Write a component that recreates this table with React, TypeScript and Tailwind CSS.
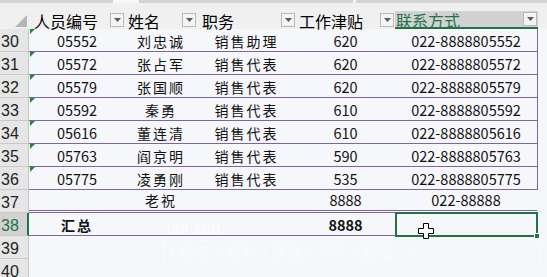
import React from 'react';

const CJK = '"Noto Sans CJK SC", "Noto Sans", sans-serif';

type Row = {
  n: number;
  id?: string;
  name?: string;
  job?: string;
  pay?: string;
  tel?: string;
  flag?: boolean;
};

const rows: Row[] = [
  { n: 30, id: '05552', name: '刘忠诚', job: '销售助理', pay: '620', tel: '022-8888805552', flag: true },
  { n: 31, id: '05572', name: '张占军', job: '销售代表', pay: '620', tel: '022-8888805572', flag: true },
  { n: 32, id: '05579', name: '张国顺', job: '销售代表', pay: '620', tel: '022-8888805579', flag: true },
  { n: 33, id: '05592', name: '秦勇', job: '销售代表', pay: '610', tel: '022-8888805592', flag: true },
  { n: 34, id: '05616', name: '董连清', job: '销售代表', pay: '610', tel: '022-8888805616', flag: true },
  { n: 35, id: '05763', name: '阎京明', job: '销售代表', pay: '590', tel: '022-8888805763', flag: true },
  { n: 36, id: '05775', name: '凌勇刚', job: '销售代表', pay: '535', tel: '022-8888805775', flag: true },
];

function FilterBtn() {
  return (
    <div className="w-[14px] h-[14px] border border-[#b9b9b9] bg-[#f4f4f4] flex items-center justify-center shrink-0">
      <svg width="7" height="4" viewBox="0 0 7 4">
        <path d="M0 0h7L3.5 4z" fill="#5a5a5a" />
      </svg>
    </div>
  );
}

function RowNum({ n, active }: { n: number; active?: boolean }) {
  return (
    <div
      className={
        'w-[29px] shrink-0 h-full flex items-end pb-[1px] pl-[1px] text-[16px] leading-none border-b border-[#c9c9c9] ' +
        (active
          ? 'bg-[#d2d2d2] text-[#217346] border-r-2 border-r-[#217346]'
          : 'bg-[#e6e6e6] text-[#222] border-r border-r-[#c6c6c6]')
      }
      style={{ fontFamily: '"Liberation Sans", sans-serif' }}
    >
      {n}
    </div>
  );
}

function Cell({
  w,
  children,
  cjk,
  bold,
  flag,
}: {
  w: string;
  children?: React.ReactNode;
  cjk?: boolean;
  bold?: boolean;
  flag?: boolean;
}) {
  return (
    <div
      className={
        w +
        ' relative shrink-0 h-full flex items-end justify-center pb-[3px] text-[#111] leading-none ' +
        (cjk ? 'text-[14px] tracking-[2px] ' : 'text-[14.5px] ') +
        (bold ? 'font-bold' : '')
      }
      style={{ fontFamily: CJK }}
    >
      {flag && (
        <svg className="absolute left-[1px] top-0" width="5" height="5" viewBox="0 0 5 5">
          <path d="M0 0h5L0 5z" fill="#1e8c2d" />
        </svg>
      )}
      {children}
    </div>
  );
}

export default function App() {
  return (
    <div className="w-[547px] h-[277px] overflow-hidden relative bg-[#f6f7fa]" style={{ fontFamily: CJK }}>
      {/* formula bar edge */}
      <div className="h-[3px] flex">
        <div className="w-[113px] bg-[#d4d4d4]" />
        <div className="w-[26px]" />
        <div className="w-[214px] bg-[#d4d4d4]" />
        <div className="w-[3px]" />
        <div className="flex-1 bg-[#d4d4d4]" />
      </div>
      <div className="h-[8px] bg-[#f0f0f0]" />

      {/* table header replacing column letters */}
      <div className="h-[18px] flex bg-[#f0f0f0] text-[16px] leading-none text-black">
        <div className="w-[29px] shrink-0 flex items-end justify-end pr-[2px] pb-[2px]">
          <svg width="12" height="12" viewBox="0 0 12 12">
            <path d="M12 0v12H0z" fill="#b5b5b5" />
          </svg>
        </div>
        <div className="w-[96px] shrink-0 flex items-center justify-between pl-[5px] pr-[1px]">
          <span className="mt-[1px]">人员编号</span>
          <FilterBtn />
        </div>
        <div className="w-[72px] shrink-0 flex items-center justify-between pl-[3px] pr-[1px]">
          <span className="mt-[1px]">姓名</span>
          <FilterBtn />
        </div>
        <div className="w-[99px] shrink-0 flex items-center justify-between pl-[5px] pr-[1px]">
          <span className="mt-[1px]">职务</span>
          <FilterBtn />
        </div>
        <div className="w-[99px] shrink-0 flex items-center justify-between pl-[3px] pr-[1px]">
          <span className="mt-[1px]">工作津贴</span>
          <FilterBtn />
        </div>
        <div className="w-[143px] shrink-0 flex items-center justify-between pl-[1px] pr-[1px] bg-[#d2d2d2] border-b-2 border-[#217346] text-[#217346]">
          <span className="mt-[1px]">联系方式</span>
          <FilterBtn />
        </div>
      </div>

      {rows.map((r) => (
        <div key={r.n} className="h-[23px] flex">
          <RowNum n={r.n} />
          <div className="flex border-b border-[#8064a2] border-r border-r-[#8064a2] h-full">
            <Cell w="w-[96px]" flag={r.flag}>{r.id}</Cell>
            <Cell w="w-[72px]" cjk>{r.name}</Cell>
            <Cell w="w-[99px]" cjk>{r.job}</Cell>
            <Cell w="w-[99px]">{r.pay}</Cell>
            <Cell w="w-[142px]">{r.tel}</Cell>
          </div>
        </div>
      ))}

      {/* row 37 */}
      <div className="h-[23px] flex">
        <RowNum n={37} />
        <div className="flex h-full border-b-[3px] border-double border-[#8064a2] w-[508px]">
          <Cell w="w-[96px]" />
          <Cell w="w-[72px]" cjk>老祝</Cell>
          <Cell w="w-[99px]" />
          <Cell w="w-[99px]">8888</Cell>
          <Cell w="w-[142px]">022-88888</Cell>
        </div>
      </div>

      {/* row 38 total */}
      <div className="h-[23px] flex">
        <RowNum n={38} active />
        <div className="flex h-full border-b border-[#8064a2]">
          <Cell w="w-[96px]" cjk bold>汇总</Cell>
          <Cell w="w-[72px]" />
          <Cell w="w-[99px]" />
          <Cell w="w-[99px]" bold>8888</Cell>
        </div>
        <div className="relative w-[143px] h-[25px] -mt-[1px] border-2 border-[#217346]">
          <div className="absolute -right-[4px] -bottom-[4px] w-[6px] h-[6px] bg-[#217346] border border-white" />
          <svg className="absolute left-[21px] top-[9px]" width="16" height="16" viewBox="0 0 16 16">
            <path
              d="M5.5 0.5h5v5h5v5h-5v5h-5v-5h-5v-5h5z"
              fill="#fff"
              stroke="#000"
              strokeWidth="1"
            />
          </svg>
        </div>
      </div>

      {/* rows 39, 40 */}
      {[39, 40].map((n) => (
        <div key={n} className="h-[23px] flex">
          <RowNum n={n} />
        </div>
      ))}

      {/* faint IME candidate ghost */}
      <div className="absolute left-[166px] top-[216px] text-[15px] font-bold text-white/50 pointer-events-none">
        lao'zhu
      </div>
      <div className="absolute left-[163px] top-[240px] w-[377px] h-[27px] border border-white/40 flex items-center pl-[3px] text-[15px] text-white/40 pointer-events-none">
        1.唠祝 2.老朱 3.老猪 4.捞竹 5.捞猪 &lt; &gt;
      </div>
    </div>
  );
}
